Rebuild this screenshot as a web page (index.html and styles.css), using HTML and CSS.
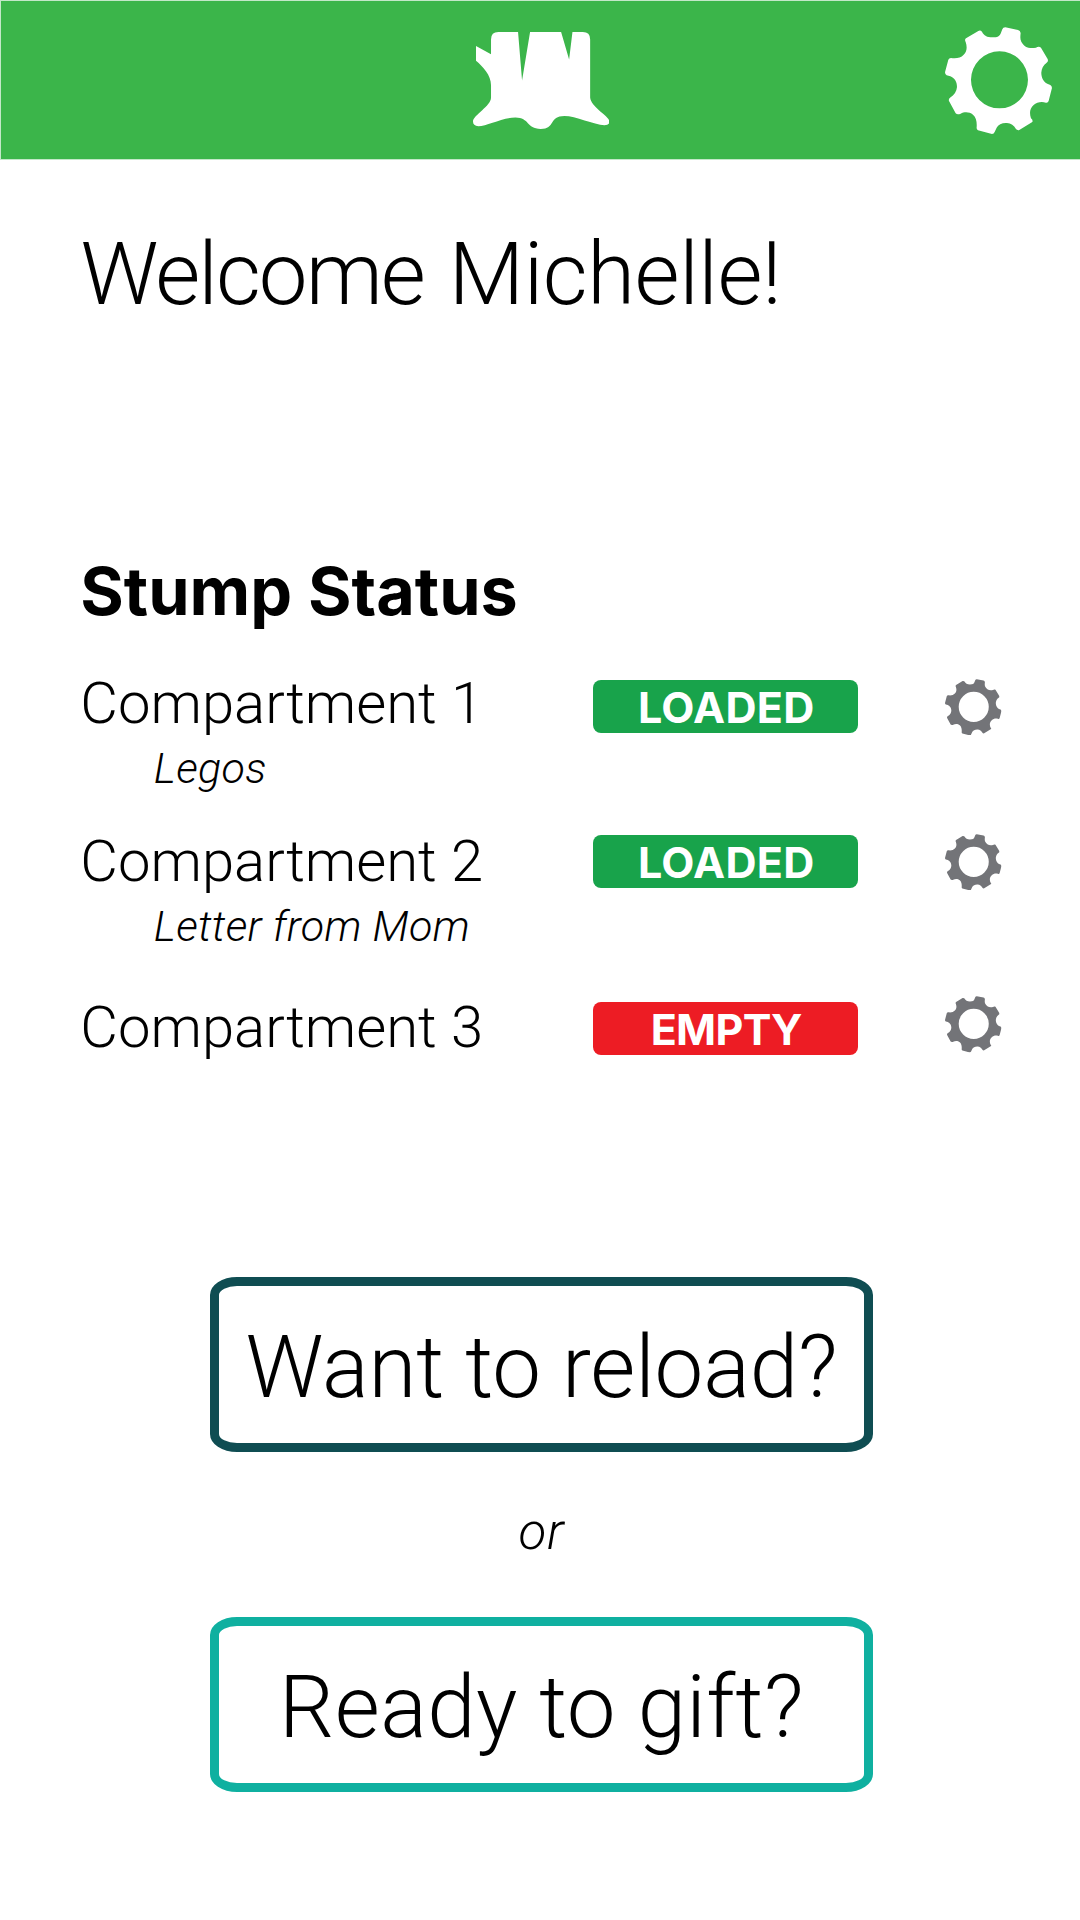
FILE: index.html
```
<!DOCTYPE html>
<html lang="en">
<head>
<meta charset="utf-8">
<title>Stump</title>
<link rel="stylesheet" href="styles.css">
</head>
<body>
<svg class="defs" aria-hidden="true">
  <symbol id="gear" viewBox="45 35 322 322">
    <path fill-rule="evenodd" d="M217 42Q219 36 226 36L264 44Q271 46 272 53C271 63 270 71 274 79C281 93 296 102 318 97C323 94 329 93 333 97L353 131Q356 138 350 142C340 149 335 159 334 172C334 187 341 200 352 205L361 209Q366 212 366 218L356 257Q354 263 348 262C334 258 320 261 311 269C299 280 298 292 303 309Q310 315 307 320L268 344Q262 346 258 341C252 330 243 324 231 323C217 322 205 327 200 337L194 350Q192 356 186 356L144 345Q139 342 140 336C141 320 139 307 129 298C118 289 103 289 92 295Q82 299 77 294L57 257Q55 251 60 247C73 239 80 228 81 215C81 200 74 188 61 183L50 180Q45 177 45 171L55 133Q57 128 63 128C79 130 92 128 101 118C111 108 112 95 107 80Q103 73 108 69L145 47Q151 44 156 49C162 61 171 66 187 66C203 66 209 63 213 52ZM208.500 108A85.500 85.500 0 1 0 208.500 279A85.500 85.500 0 1 0 208.500 108Z"/>
  </symbol>
</svg>

<header class="topbar">
  <svg class="logo" viewBox="38 36 409 290" role="img" aria-label="Stump">
    <path d="M92 102V58Q92 36 114 36H173L185 181L209 36H302L326 118L336 36H367Q389 36 389 58V232C392 262 447 288 447 304Q447 315 432 315C400 313 345 287 312 287C265 287 285 326 241 326C197 326 208 292 165 292C125 292 80 318 54 318Q38 317 38 304C38 285 92 258 92 232V195C92 165 68 140 47 122V78Z"/>
  </svg>
  <svg class="settings"><use href="#gear"/></svg>
</header>

<main>
  <h1 class="welcome"><span class="greeting">Welcome</span> <span class="user">Michelle!</span></h1>

  <section class="status">
    <h2 class="status-title">Stump Status</h2>
    <div class="row row-1">
      <div class="label">
        <p class="name">Compartment 1</p>
        <p class="item">Legos</p>
      </div>
      <span class="badge loaded">LOADED</span>
      <svg class="gear"><use href="#gear"/></svg>
    </div>
    <div class="row row-2">
      <div class="label">
        <p class="name">Compartment 2</p>
        <p class="item">Letter from Mom</p>
      </div>
      <span class="badge loaded">LOADED</span>
      <svg class="gear"><use href="#gear"/></svg>
    </div>
    <div class="row row-3">
      <div class="label">
        <p class="name">Compartment 3</p>
      </div>
      <span class="badge empty">EMPTY</span>
      <svg class="gear"><use href="#gear"/></svg>
    </div>
  </section>

  <section class="actions">
    <button class="action reload">Want to reload?</button>
    <p class="or">or</p>
    <button class="action gift">Ready to gift?</button>
  </section>
</main>
</body>
</html>
```
FILE: styles.css
```
* {
  box-sizing: border-box;
}

body {
  margin: 0;
  background: #fff;
  color: #000;
  font-family: Roboto, "Liberation Sans", sans-serif;
  font-weight: 300;
}

h1, h2, p {
  margin: 0;
  font-weight: 300;
}

.defs {
  display: block;
  width: 0;
  height: 0;
}

.topbar {
  display: grid;
  grid-template-columns: 1fr 136.500px 1fr;
  height: 160px;
  border: solid #c3e8c8;
  border-width: 1px 0 1px 1px;
  background: #3bb54a;
  fill: #fff;
}

.logo {
  grid-column: 2;
  width: 136.500px;
  height: 97px;
  margin: 31px 0 0 0.700px;
}

.settings {
  justify-self: end;
  width: 107.300px;
  height: 107.300px;
  margin: 25.500px 27.700px 0 0;
}

.welcome {
  margin: 62px 0 0 80.600px;
  font-size: 87px;
  line-height: 104px;
  word-spacing: 3.700px;
}

.greeting {
  letter-spacing: -1.950px;
}

.user {
  letter-spacing: -0.420px;
}

.status {
  margin-top: 225px;
  padding-left: 80.300px;
}

.status-title {
  font-family: Inter, "Liberation Sans", sans-serif;
  font-size: 66.500px;
  font-weight: 700;
  line-height: 80px;
}

.row {
  display: grid;
  grid-template-columns: 512.700px 265px 56.600px;
  align-items: start;
}

.row-1 { height: 158px; margin-top: 38px; }
.row-2 { height: 166px; }
.row-3 { height: 68px; }

.name {
  font-size: 58px;
  line-height: 68px;
}

.item {
  margin-top: 6px;
  padding-left: 73.500px;
  font-size: 43px;
  font-style: italic;
  line-height: 50px;
  letter-spacing: 0.350px;
}

.badge {
  height: 53px;
  padding: 1px 0 0 1.500px;
  border-radius: 8px;
  color: #fff;
  font-family: Inter, "Liberation Sans", sans-serif;
  font-size: 43px;
  font-weight: 700;
  line-height: 53px;
  text-align: center;
}

.loaded {
  background: #18a34b;
  letter-spacing: 0.300px;
}

.empty {
  background: #ed1c24;
  letter-spacing: -0.700px;
}

.gear {
  justify-self: end;
  width: 56.600px;
  height: 56.600px;
  margin-right: -87.500px;
  fill: #737478;
}

.row-1 .badge { margin-top: 11px; }
.row-2 .badge { margin-top: 8px; }
.row-3 .badge { margin-top: 9px; }
.row-1 .gear { margin-top: 9.600px; }
.row-2 .gear { margin-top: 6.700px; }
.row-3 .gear { margin-top: 3px; }

.actions {
  display: flex;
  flex-direction: column;
  align-items: center;
  margin-top: 216px;
  padding-left: 3px;
}

.action {
  width: 663px;
  height: 175px;
  padding: 4px 0 0;
  border: 9px solid;
  border-radius: 27px / 18px;
  background: #fff;
  color: #000;
  font: 300 87px/104px Roboto, "Liberation Sans", sans-serif;
  text-align: center;
}

.reload {
  border-color: #0f4d52;
  letter-spacing: -0.120px;
}

.gift {
  border-color: #0fb0a0;
  letter-spacing: 0.400px;
}

.or {
  margin: 50px 0 55px;
  font-size: 51px;
  font-style: italic;
  line-height: 60px;
  letter-spacing: 0.800px;
}
```
